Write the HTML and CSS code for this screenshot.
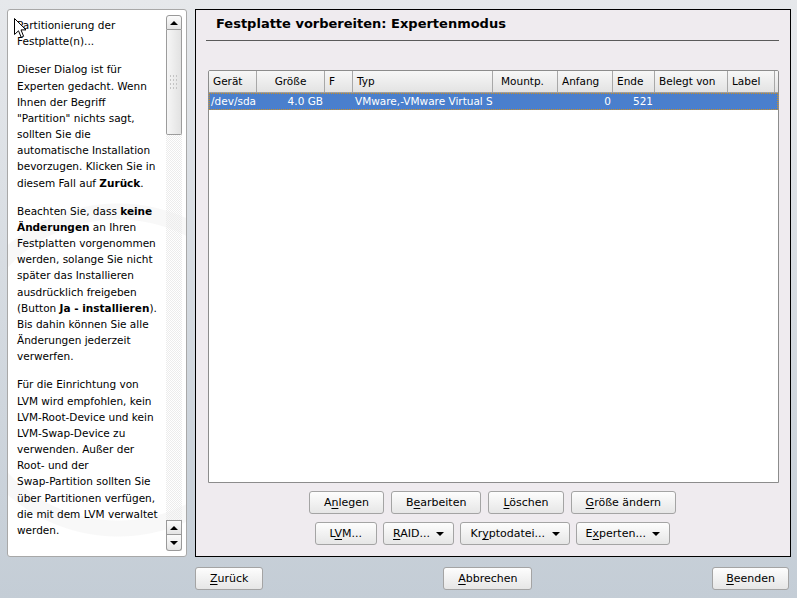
FILE: index.html
```html
<!DOCTYPE html>
<html lang="de">
<head>
  <meta charset="UTF-8" />
  <title>Festplatte vorbereiten: Expertenmodus</title>
  <link rel="stylesheet" href="styles.css">
</head>
<body>

<div class="main">
  <!-- Hilfetext links -->
  <aside class="help">
    <div class="help-text">
      <p>Partitionierung der Festplatte(n)...</p>
      <p>Dieser Dialog ist für Experten gedacht. Wenn Ihnen der Begriff "Partition" nichts sagt, sollten Sie die automatische Installation bevorzugen. Klicken Sie in diesem Fall auf <b>Zurück</b>.</p>
      <p>Beachten Sie, dass <b>keine Änderungen</b> an Ihren Festplatten vorgenommen werden, solange Sie nicht später das Installieren ausdrücklich freigeben (Button <b>Ja - installieren</b>). Bis dahin können Sie alle Änderungen jederzeit verwerfen.</p>
      <p>Für die Einrichtung von LVM wird empfohlen, kein LVM-Root-Device und kein LVM-Swap-Device zu verwenden. Außer der Root- und der <span class="nowrap">Swap-Partition</span> sollten Sie über Partitionen verfügen, die mit dem LVM verwaltet werden.</p>
    </div>
    <div class="scrollbar">
      <div class="sb-btn sb-top"><span class="arrow-up"></span></div>
      <div class="sb-thumb"><span class="grip"></span></div>
      <div class="sb-track"></div>
      <div class="sb-btn"><span class="arrow-up"></span></div>
      <div class="sb-btn sb-bottom"><span class="arrow-down"></span></div>
    </div>
  </aside>

  <!-- Arbeitsbereich -->
  <section class="pane">
    <h1 class="title">Festplatte vorbereiten: Expertenmodus</h1>
    <hr class="sep">

    <div class="table">
      <div class="row head">
        <div class="cell">Gerät</div>
        <div class="cell center">Größe</div>
        <div class="cell">F</div>
        <div class="cell">Typ</div>
        <div class="cell mount">Mountp.</div>
        <div class="cell">Anfang</div>
        <div class="cell">Ende</div>
        <div class="cell">Belegt von</div>
        <div class="cell">Label</div>
      </div>
      <div class="row selected">
        <div class="cell">/dev/sda</div>
        <div class="cell right">4.0 GB</div>
        <div class="cell"></div>
        <div class="cell">VMware,-VMware Virtual S</div>
        <div class="cell"></div>
        <div class="cell right">0</div>
        <div class="cell right">521</div>
        <div class="cell"></div>
        <div class="cell"></div>
      </div>
    </div>

    <div class="actions">
      <button class="btn">A<u>n</u>legen</button>
      <button class="btn">B<u>e</u>arbeiten</button>
      <button class="btn"><u>L</u>öschen</button>
      <button class="btn"><u>G</u>röße ändern</button>
    </div>
    <div class="actions second">
      <button class="btn">L<u>V</u>M...</button>
      <button class="btn menu"><u>R</u>AID... <span class="drop"></span></button>
      <button class="btn menu">Kr<u>y</u>ptodatei... <span class="drop"></span></button>
      <button class="btn menu">E<u>x</u>perten... <span class="drop"></span></button>
    </div>
  </section>
</div>

<footer class="bottom">
  <button class="btn"><u>Z</u>urück</button>
  <button class="btn"><u>A</u>bbrechen</button>
  <button class="btn"><u>B</u>eenden</button>
</footer>

<svg class="cursor" width="13" height="21" viewBox="0 0 13 21">
  <path d="M0.5 0.5 L0.5 16.5 L4.5 12.8 L7.2 19.3 L9.6 18.3 L7 11.9 L12 11.9 Z" fill="#fff" stroke="#000" stroke-width="1"/>
</svg>

</body>
</html>
```

FILE: styles.css
```css
body {
  margin: 0;
  width: 797px;
  height: 598px;
  overflow: hidden;
  font-family: 'DejaVu Sans', 'Liberation Sans', sans-serif;
  font-size: 11px;
  color: #000;
  background: linear-gradient(#e6e8eb, #c4cdd6);
  position: relative;
}

.main {
  display: flex;
  gap: 8px;
  height: 548px;
  padding: 9px 6px 0 7px;
}

/* linke Hilfe */
.help {
  width: 180px;
  box-sizing: border-box;
  background: radial-gradient(circle at 110px 360px, transparent 0 150px, #f8f8f8 151px 166px, transparent 167px), #fff;
  border: 1px solid #a8a8a8;
  border-radius: 3px;
  display: flex;
}

.help-text {
  flex: 1;
  padding: 7px 4px 0 9px;
  font-size: 10.5px;
  line-height: 16.15px;
  overflow: hidden;
}

.help-text p {
  margin: 0 0 12.1px;
}

.nowrap {
  white-space: nowrap;
}

.scrollbar {
  width: 16px;
  margin: 5px 4px 5px 0;
  display: flex;
  flex-direction: column;
}

.sb-btn {
  height: 15px;
  box-sizing: border-box;
  border: 1px solid #999;
  background: linear-gradient(#fbfbfb, #e4e4e4);
  display: flex;
  align-items: center;
  justify-content: center;
}

.sb-top {
  border-radius: 3px 3px 0 0;
}

.sb-bottom {
  border-top: none;
  height: 16px;
  border-radius: 0 0 3px 3px;
}

.sb-thumb {
  height: 105px;
  box-sizing: border-box;
  border: 1px solid #9c9c9c;
  border-top: none;
  border-radius: 0 0 2px 2px;
  background: linear-gradient(90deg, #f6f6f6, #e2e2e2);
  display: flex;
  align-items: center;
  justify-content: center;
}

.grip {
  width: 10px;
  height: 17px;
  background-image: radial-gradient(#c4c4c4 0.8px, transparent 0.9px);
  background-size: 3px 4px;
}

.sb-track {
  flex: 1;
  background-image: linear-gradient(45deg, #ececec 25%, transparent 25%, transparent 75%, #ececec 75%),
                    linear-gradient(45deg, #ececec 25%, transparent 25%, transparent 75%, #ececec 75%);
  background-size: 2px 2px;
  background-position: 0 0, 1px 1px;
}

.arrow-up,
.arrow-down,
.drop {
  width: 0;
  height: 0;
  border-left: 4px solid transparent;
  border-right: 4px solid transparent;
  display: inline-block;
}

.arrow-up {
  border-bottom: 4px solid #000;
}

.arrow-down,
.drop {
  border-top: 4px solid #000;
}

.drop {
  margin-left: 3px;
  vertical-align: 1px;
}

/* rechter Bereich */
.pane {
  flex: 1;
  background: #efebef;
  border: 1px solid #000;
  display: flex;
  flex-direction: column;
  padding: 0 11px 11px 10px;
}

.title {
  font-size: 13px;
  line-height: 17px;
  font-weight: bold;
  margin: 5px 0 0 10px;
}

.sep {
  border: none;
  border-top: 1px solid #5a5a5a;
  margin: 8px 0 0;
  height: 0;
}

.table {
  flex: 1;
  margin: 29px 0 0 2px;
  background: #fff;
  border: 1px solid #8c8c8c;
  border-radius: 2px 2px 0 0;
  overflow: hidden;
}

.row {
  display: grid;
  grid-template-columns: 48px 68px 28px 140px 65px 55px 42px 73px 47px;
  height: 17px;
  line-height: 17px;
  font-size: 10.5px;
}

.row .cell {
  padding: 0 2px;
  white-space: nowrap;
  overflow: hidden;
}

.head {
  height: 21px;
  line-height: 21px;
  background: linear-gradient(#f7f7f7, #e3e3e3);
  border-bottom: 1px solid #a0a0a0;
}

.head .cell {
  padding: 0 4px;
  border-right: 1px solid #a8a8a8;
}

.head .cell.center {
  text-align: center;
}

.head .cell.mount {
  padding-left: 8px;
}

.cell.right {
  text-align: right;
}

.selected {
  background: #4a7fcd;
  color: #fff;
  outline: 1px dotted #d09020;
  outline-offset: -1px;
}

.actions {
  display: flex;
  justify-content: center;
  gap: 7px;
  margin-top: 8px;
}

.actions.second {
  gap: 6px;
}

.btn {
  height: 23px;
  padding: 0 14px;
  font-family: 'DejaVu Sans', 'Liberation Sans', sans-serif;
  font-size: 11px;
  color: #000;
  background: linear-gradient(#fdfdfd, #e6e6e6);
  border: 1px solid #a4a4a4;
  border-radius: 3px;
  white-space: nowrap;
  min-width: 61px;
}

.btn.menu {
  padding: 0 9px;
}

.btn u {
  text-underline-offset: 2px;
}

.bottom {
  display: flex;
  justify-content: space-between;
  padding: 10px 8px 0 195px;
}

.bottom .btn:last-child {
  padding: 0 13px;
}

.cursor {
  position: absolute;
  left: 14px;
  top: 18px;
}
```
